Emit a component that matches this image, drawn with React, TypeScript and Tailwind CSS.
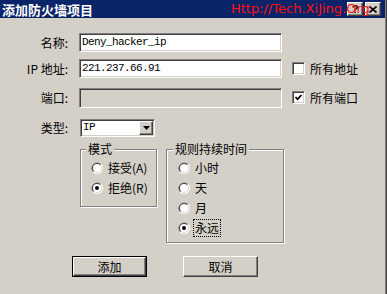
const cjk = "font-['SimSun','Noto_Sans_CJK_SC',sans-serif]";
const mono = "font-['Liberation_Mono','Noto_Sans_CJK_SC',monospace]";

const sunken =
  "border border-t-[#808080] border-l-[#808080] border-b-white border-r-white shadow-[inset_1px_1px_0_#404040,inset_-1px_-1px_0_#d4d0c8]";
const raised =
  "border border-t-white border-l-white border-b-[#404040] border-r-[#404040] shadow-[inset_-1px_-1px_0_#808080,inset_1px_1px_0_#d4d0c8]";

function Radio({ checked }: { checked?: boolean }) {
  return (
    <svg width="12" height="12" viewBox="0 0 12 12" className="shrink-0" aria-hidden>
      <circle cx="6" cy="6" r="6" fill="#ffffff" />
      <path d="M10.24 1.76A6 6 0 0 0 1.76 10.24Z" fill="#808080" />
      <circle cx="6" cy="6" r="5" fill="#d4d0c8" />
      <path d="M9.54 2.46A5 5 0 0 0 2.46 9.54Z" fill="#404040" />
      <circle cx="6" cy="6" r="4" fill="#ffffff" />
      {checked && <circle cx="6" cy="6" r="2" fill="#000000" />}
    </svg>
  );
}

function Check({ checked }: { checked?: boolean }) {
  return (
    <span className={`w-[13px] h-[13px] shrink-0 bg-white flex items-center justify-center ${sunken}`}>
      {checked && (
        <svg width="9" height="9" viewBox="0 0 9 9" aria-hidden>
          <polyline points="1.5,4 3.5,6.2 7.5,2" fill="none" stroke="#000" strokeWidth="1.7" />
        </svg>
      )}
    </span>
  );
}

function Row({ label, children }: { label: string; children: React.ReactNode }) {
  return (
    <div className="flex items-center h-[19px]">
      <span className="w-[68px] text-right text-[12px] leading-none">{label}</span>
      {children}
    </div>
  );
}

function RadioItem({ label, checked, focus }: { label: string; checked?: boolean; focus?: boolean }) {
  return (
    <div className="flex items-center h-[20px]">
      <Radio checked={checked} />
      <span
        className={`ml-[3px] text-[12px] leading-[16px] px-[1px] ${
          focus ? "border border-dotted border-black" : "border border-transparent"
        }`}
      >
        {label}
      </span>
    </div>
  );
}

export default function App() {
  return (
    <div
      className={`relative w-[387px] h-[294px] overflow-hidden bg-[#d4d0c8] text-black pr-[2px] shadow-[inset_-1px_0_0_#404040,inset_-2px_0_0_#808080] ${cjk}`}
    >
      {/* title bar */}
      <div className="flex items-center h-[18px] bg-[#0a246a] pl-[2px] pr-[4px]">
        <span className="text-white text-[13px] font-bold leading-none">添加防火墙项目</span>
        <div className="ml-auto flex gap-[2px]">
          <span className={`w-[16px] h-[14px] bg-[#d4d0c8] flex items-center justify-center text-[11px] font-bold leading-none font-['Liberation_Sans',sans-serif] ${raised}`}>
            ?
          </span>
          <span className={`w-[16px] h-[14px] bg-[#d4d0c8] flex items-center justify-center ${raised}`}>
            <svg width="8" height="7" viewBox="0 0 8 7" aria-hidden>
              <path d="M0.5 0.5L7.5 6.5M7.5 0.5L0.5 6.5" stroke="#000" strokeWidth="1.6" />
            </svg>
          </span>
        </div>
      </div>

      {/* watermark stamped over the title bar */}
      <span className="absolute left-[231px] top-[1px] text-[13px] leading-[16px] text-[#ff1010] font-['DejaVu_Sans',sans-serif] whitespace-nowrap">
        Http://Tech.XiJing.Org
      </span>

      {/* form */}
      <div className="pt-[15px]">
        <Row label="名称:">
          <div className={`ml-[11px] w-[203px] h-[19px] bg-white flex items-center pl-[2px] text-[11px] tracking-[-0.6px] ${mono} ${sunken}`}>
            Deny_hacker_ip
          </div>
        </Row>
        <div className="mt-[7px]">
          <Row label="IP 地址:">
            <div className={`ml-[11px] w-[203px] h-[19px] bg-white flex items-center pl-[2px] text-[11px] tracking-[-0.6px] ${mono} ${sunken}`}>
              221.237.66.91
            </div>
            <div className="ml-[10px] flex items-center gap-[5px]">
              <Check />
              <span className="text-[12px] leading-none">所有地址</span>
            </div>
          </Row>
        </div>
        <div className="mt-[10px]">
          <Row label="端口:">
            <div className={`ml-[11px] w-[203px] h-[20px] bg-[#d4d0c8] ${sunken}`} />
            <div className="ml-[10px] flex items-center gap-[5px]">
              <Check checked />
              <span className="text-[12px] leading-none">所有端口</span>
            </div>
          </Row>
        </div>
        <div className="mt-[11px]">
          <Row label="类型:">
            <div className={`ml-[12px] w-[75px] h-[18px] bg-white flex items-center pl-[2px] pr-[1px] ${sunken}`}>
              <span className={`text-[11px] tracking-[-0.6px] ${mono}`}>IP</span>
              <span className={`ml-auto w-[14px] h-[14px] bg-[#d4d0c8] flex items-center justify-center ${raised}`}>
                <svg width="7" height="4" viewBox="0 0 7 4" aria-hidden>
                  <path d="M0 0H7L3.5 4Z" fill="#000" />
                </svg>
              </span>
            </div>
          </Row>
        </div>

        {/* group boxes */}
        <div className="flex items-start mt-[5px] ml-[80px]">
          <fieldset className="w-[77px] border border-[#808080] shadow-[inset_1px_1px_0_#fff,1px_1px_0_#fff] pl-[10px] pb-[8px]">
            <legend className="ml-[-5px] px-[2px] bg-[#d4d0c8] text-[12px] leading-[14px]">模式</legend>
            <div className="mt-[2px]">
              <RadioItem label="接受(A)" />
              <RadioItem label="拒绝(R)" checked />
            </div>
          </fieldset>
          <fieldset className="ml-[9px] w-[118px] border border-[#808080] shadow-[inset_1px_1px_0_#fff,1px_1px_0_#fff] pl-[11px] pb-[4px]">
            <legend className="ml-[-5px] px-[2px] bg-[#d4d0c8] text-[12px] leading-[14px]">规则持续时间</legend>
            <div className="mt-[2px]">
              <RadioItem label="小时" />
              <RadioItem label="天" />
              <RadioItem label="月" />
              <RadioItem label="永远" checked focus />
            </div>
          </fieldset>
        </div>

        {/* buttons */}
        <div className="flex items-start mt-[13px] ml-[72px] gap-[36px]">
          <div className="flex border border-black">
            <button className={`w-[73px] h-[19px] bg-[#d4d0c8] text-[12px] leading-none ${raised}`}>添加</button>
          </div>
          <button className={`w-[75px] h-[21px] bg-[#d4d0c8] text-[12px] leading-none ${raised}`}>取消</button>
        </div>
      </div>
    </div>
  );
}
